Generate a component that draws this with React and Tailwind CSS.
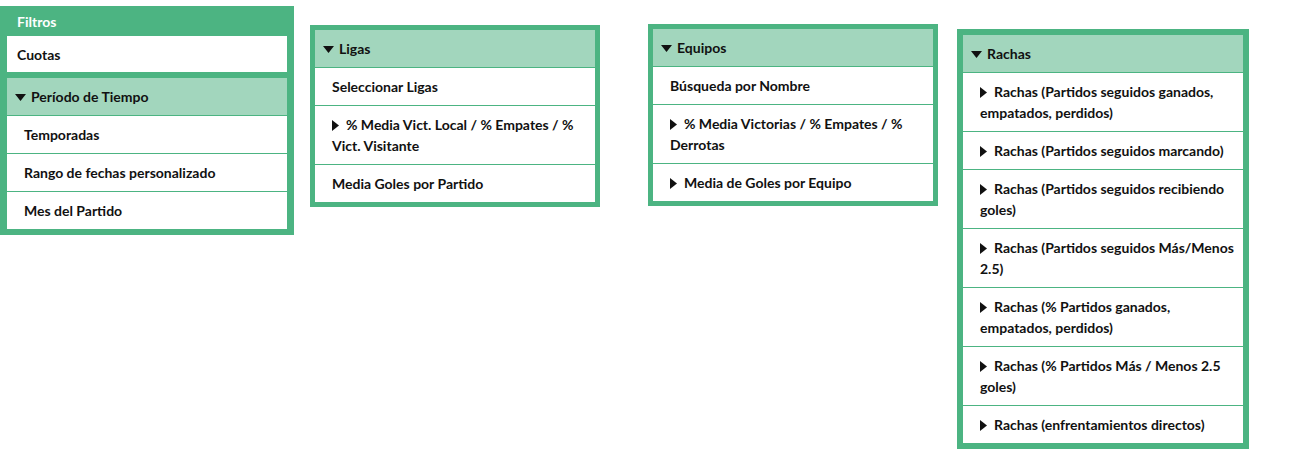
import React from 'react';

const font = { fontFamily: 'Lato, "Open Sans", sans-serif' };

function Down() {
  return (
    <svg width="11" height="7" viewBox="0 0 11 7" className="inline-block mr-[5px] mb-[2px]">
      <path d="M0 0 H11 L5.5 7 Z" fill="#111" />
    </svg>
  );
}

function Right() {
  return (
    <svg width="7" height="11" viewBox="0 0 7 11" className="inline-block mr-[7px] mb-[2px]">
      <path d="M0 0 L7 5.5 L0 11 Z" fill="#111" />
    </svg>
  );
}

function Row({ children, arrow, last }) {
  return (
    <div className={`bg-white pl-[17px] pr-1 py-2 leading-[21px] ${last ? '' : 'border-b border-[#4cb482]'}`}>
      {arrow && <Right />}
      {children}
    </div>
  );
}

function Head({ children }) {
  return (
    <div className="bg-[#a2d6bd] px-2 py-2 leading-[21px] border-b border-[#4cb482]">
      <Down />
      {children}
    </div>
  );
}

function Panel({ title, rows, className }) {
  return (
    <div className={`border-[5px] border-[#4cb482] ${className}`}>
      <Head>{title}</Head>
      {rows.map((r, i) => (
        <Row key={i} arrow={r.arrow} last={i === rows.length - 1}>{r.label}</Row>
      ))}
    </div>
  );
}

export default function App() {
  return (
    <div className="flex items-start bg-white min-h-[461px] text-[14px] font-bold text-[#111]" style={font}>
      <div className="mt-[6px] w-[294px] bg-[#4cb482] px-[7px] pb-[6px]">
        <div className="h-[30px] flex items-center px-[10px] pt-[1px] text-white">Filtros</div>
        <div className="bg-white h-[36px] flex items-center px-[10px]">Cuotas</div>
        <div className="mt-[6px]">
          <Head>Período de Tiempo</Head>
          <Row>Temporadas</Row>
          <Row>Rango de fechas personalizado</Row>
          <Row last>Mes del Partido</Row>
        </div>
      </div>

      <Panel
        className="ml-[16px] mt-[25px] w-[290px]"
        title="Ligas"
        rows={[
          { label: 'Seleccionar Ligas' },
          { label: '% Media Vict. Local / % Empates / % Vict. Visitante', arrow: true },
          { label: 'Media Goles por Partido' },
        ]}
      />

      <Panel
        className="ml-[48px] mt-[24px] w-[290px]"
        title="Equipos"
        rows={[
          { label: 'Búsqueda por Nombre' },
          { label: '% Media Victorias / % Empates / % Derrotas', arrow: true },
          { label: 'Media de Goles por Equipo', arrow: true },
        ]}
      />

      <Panel
        className="ml-[19px] mt-[29px] w-[292px] border-[6px]"
        title="Rachas"
        rows={[
          { label: 'Rachas (Partidos seguidos ganados, empatados, perdidos)', arrow: true },
          { label: 'Rachas (Partidos seguidos marcando)', arrow: true },
          { label: 'Rachas (Partidos seguidos recibiendo goles)', arrow: true },
          { label: 'Rachas (Partidos seguidos Más/Menos 2.5)', arrow: true },
          { label: 'Rachas (% Partidos ganados, empatados, perdidos)', arrow: true },
          { label: 'Rachas (% Partidos Más / Menos 2.5 goles)', arrow: true },
          { label: 'Rachas (enfrentamientos directos)', arrow: true },
        ]}
      />
    </div>
  );
}
